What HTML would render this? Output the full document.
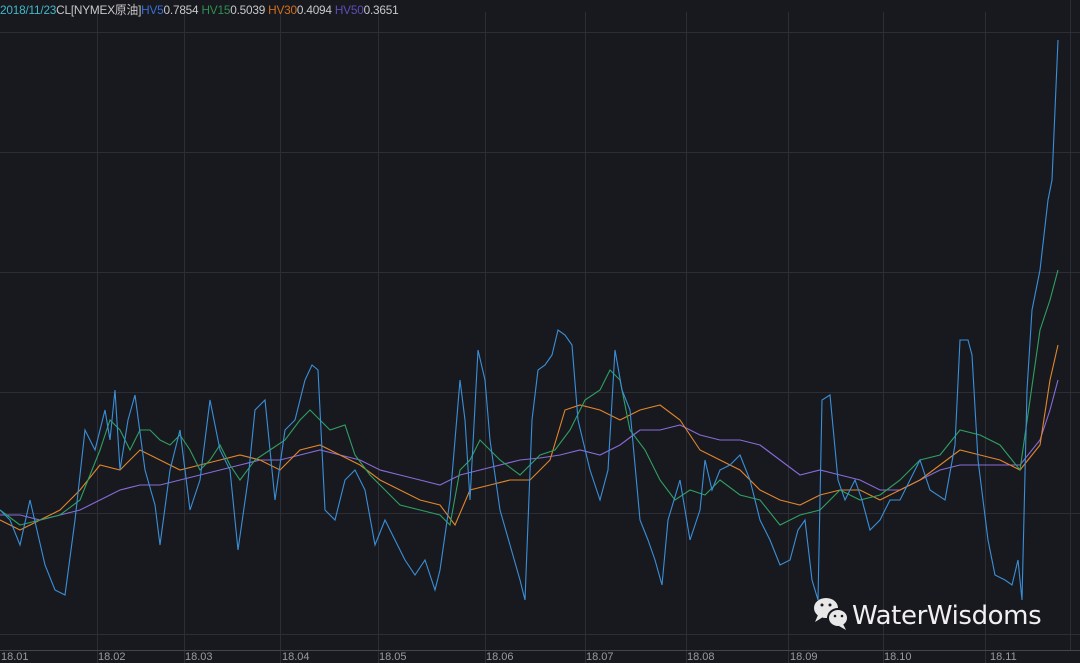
<!DOCTYPE html>
<html><head><meta charset="utf-8"><style>
html,body{margin:0;padding:0;background:#18191f;}
body{width:1080px;height:663px;overflow:hidden;position:relative;font-family:"Liberation Sans","Noto Sans CJK SC",sans-serif;}
.hdr{position:absolute;left:0;top:1px;font-size:11.8px;color:#c8c8c8;white-space:nowrap;letter-spacing:-0.2px}
.lbl{position:absolute;top:651px;font-size:11px;color:#9a9aa0}
.wm{position:absolute;left:852px;top:601px;font-size:26px;color:#f0f0f0;font-family:"DejaVu Sans","Liberation Sans",sans-serif;letter-spacing:-0.4px}
</style></head><body>
<svg width="1080" height="663" style="position:absolute;left:0;top:0">
<g stroke="#2c2d35" stroke-width="1">
<line x1="0" y1="32.5" x2="1080" y2="32.5"/><line x1="0" y1="152.5" x2="1080" y2="152.5"/>
<line x1="0" y1="272.5" x2="1080" y2="272.5"/><line x1="0" y1="392.5" x2="1080" y2="392.5"/>
<line x1="0" y1="513.5" x2="1080" y2="513.5"/><line x1="0" y1="634.5" x2="1080" y2="634.5"/>
<line x1="97.5" y1="12" x2="97.5" y2="663"/><line x1="184.5" y1="12" x2="184.5" y2="663"/>
<line x1="280.5" y1="12" x2="280.5" y2="663"/><line x1="378.5" y1="12" x2="378.5" y2="663"/>
<line x1="485.5" y1="12" x2="485.5" y2="663"/><line x1="585.5" y1="12" x2="585.5" y2="663"/>
<line x1="686.5" y1="12" x2="686.5" y2="663"/><line x1="788.5" y1="12" x2="788.5" y2="663"/>
<line x1="883.5" y1="12" x2="883.5" y2="663"/><line x1="985.5" y1="12" x2="985.5" y2="663"/>
</g>
<line x1="0" y1="650.5" x2="1080" y2="650.5" stroke="#44454d"/>
<line x1="1070.5" y1="0" x2="1070.5" y2="650" stroke="#2c2d35"/>
<g fill="none" stroke-width="1.1">
<polyline stroke="#8a6ad8" points="0,515 20,515 40,520 60,515 80,510 100,500 120,490 140,485 160,485 180,480 200,475 220,470 240,465 260,460 280,460 300,455 320,450 340,455 360,460 380,470 400,475 420,480 440,485 460,475 480,470 500,465 520,460 540,458 560,455 580,450 600,455 620,445 640,430 660,430 680,425 700,435 720,440 740,440 760,445 780,460 800,475 820,470 840,475 860,480 880,490 900,490 920,480 940,470 960,465 980,465 1000,465 1020,465 1040,440 1050,410 1058,380"/>
<polyline stroke="#e0862c" points="0,520 20,530 40,520 60,510 80,490 100,465 120,470 140,450 160,460 180,470 200,465 220,460 240,455 260,460 280,470 300,450 320,445 340,455 360,465 380,480 400,490 420,500 440,505 455,525 470,490 490,485 510,480 530,480 550,460 565,410 580,405 600,410 620,420 640,410 660,405 680,420 700,450 720,460 740,470 760,490 780,500 800,505 820,495 840,490 860,490 880,500 900,490 920,480 940,465 960,450 980,455 1000,460 1020,470 1040,445 1050,380 1058,345"/>
<polyline stroke="#2fa060" points="0,510 20,525 40,520 60,515 80,500 100,450 110,420 120,430 130,450 140,430 150,430 160,440 170,445 180,435 190,450 200,470 210,460 220,445 230,465 240,480 255,460 270,450 285,440 300,420 310,410 320,420 330,430 345,425 355,455 370,475 385,490 400,505 420,510 440,515 450,525 460,470 470,460 480,440 500,460 520,475 540,455 555,450 570,430 585,400 600,390 610,370 620,380 630,430 645,450 660,480 675,500 690,490 705,495 720,480 740,495 760,500 780,525 800,515 820,510 840,490 860,500 880,495 900,480 920,460 940,455 960,430 980,435 1000,445 1020,470 1030,400 1040,330 1050,300 1058,270"/>
<polyline stroke="#3a8fd8" points="0,510 10,520 20,545 30,500 45,565 55,590 65,595 75,520 85,430 95,450 105,410 110,440 115,390 120,470 128,420 135,395 145,470 155,505 160,545 170,470 180,430 190,510 200,480 210,400 220,450 230,470 238,550 248,480 255,410 265,400 275,500 285,430 295,420 305,380 312,365 318,370 325,510 335,520 345,480 355,470 365,490 375,545 385,520 395,540 405,560 415,575 425,560 435,590 440,570 450,500 460,380 465,420 470,500 478,350 485,380 490,440 500,510 510,545 520,580 525,600 532,420 538,370 545,365 552,355 558,330 565,335 572,345 578,420 590,470 600,500 608,470 615,350 622,390 630,410 640,520 648,540 655,560 662,585 668,520 680,480 690,540 700,510 705,460 712,490 720,470 730,465 740,455 750,480 760,520 770,540 780,565 790,560 798,530 805,520 812,580 818,600 822,400 830,395 838,480 845,500 855,480 862,500 870,530 880,520 890,500 900,500 910,480 920,460 930,490 945,500 955,445 960,340 968,340 972,355 978,460 988,540 995,575 1005,580 1012,585 1018,560 1022,600 1027,390 1032,310 1040,270 1048,200 1052,180 1058,40"/>
</g>
<g fill="#e8e8e8">
<ellipse cx="826" cy="608" rx="12" ry="10"/>
<path d="M818 615 L815 622 L823 617Z"/>
<ellipse cx="838" cy="618" rx="10" ry="9" stroke="#18191f" stroke-width="2"/>
<path d="M843 624 L846 630 L839 626Z"/>
</g>
<g fill="#18191f"><circle cx="822" cy="605" r="1.5"/><circle cx="830" cy="605" r="1.5"/><circle cx="835" cy="616" r="1.3"/><circle cx="842" cy="616" r="1.3"/></g>
</svg>
<div class="hdr"><span style="color:#3fb8c8">2018/11/23</span>CL[NYMEX原油]<span style="color:#3a6fd0">HV5</span>0.7854 <span style="color:#2f8f4f">HV15</span>0.5039 <span style="color:#d0701f">HV30</span>0.4094 <span style="color:#5a4fb8">HV50</span>0.3651</div>
<div class="lbl" style="left:1px">18.01</div><div class="lbl" style="left:98px">18.02</div>
<div class="lbl" style="left:185px">18.03</div><div class="lbl" style="left:282px">18.04</div>
<div class="lbl" style="left:379px">18.05</div><div class="lbl" style="left:486px">18.06</div>
<div class="lbl" style="left:586px">18.07</div><div class="lbl" style="left:687px">18.08</div>
<div class="lbl" style="left:790px">18.09</div><div class="lbl" style="left:884px">18.10</div>
<div class="lbl" style="left:990px">18.11</div>
<div class="wm">WaterWisdoms</div>
</body></html>
